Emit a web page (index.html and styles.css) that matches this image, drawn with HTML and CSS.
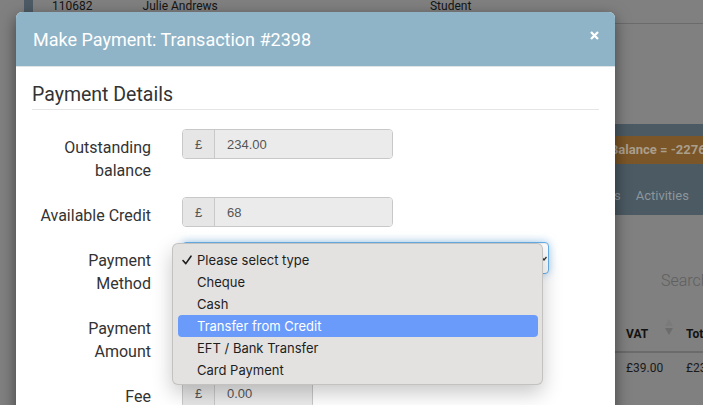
FILE: index.html
```html
<!DOCTYPE html>
<html lang="en">
<head>
<meta charset="utf-8">
<title>Make Payment</title>
<link rel="stylesheet" href="styles.css">
</head>
<body>
<div class="page">
  <div class="toprow">
    <span class="strip"></span>
    <span class="c-id">110682</span>
    <span class="c-name">Julie Andrews</span>
    <span class="c-type">Student</span>
  </div>
  <div class="side">
    <div class="navband">
      <div class="balance">Balance = -2276.00</div>
      <div class="tabs"><span>Payments</span><span>Activities</span></div>
    </div>
    <div class="search">Search</div>
    <div class="thead">
      <span class="th th-vat">VAT<svg class="sort" width="8" height="16" viewBox="0 0 8 16"><path d="M4 0 L8 7 L0 7 Z" fill="#7a7a7a"/><path d="M0 9 L8 9 L4 16 Z" fill="#6c6c6c"/></svg></span>
      <span class="th">Total</span>
    </div>
    <div class="trow"><span class="td">£39.00</span><span class="td">£234.00</span></div>
  </div>
</div>

<div class="modal">
  <div class="mhead">
    <h4 class="mtitle">Make Payment: Transaction #2398</h4>
    <svg class="close" width="9" height="9" viewBox="0 0 9 9"><path d="M1 1 L8 8 M8 1 L1 8" stroke="#fff" stroke-width="2.3" fill="none"/></svg>
  </div>
  <div class="mbody">
    <div class="legend">Payment Details</div>

    <div class="form-row">
      <label class="lbl">Outstanding balance</label>
      <div class="igroup"><span class="addon">£</span><span class="val">234.00</span></div>
    </div>

    <div class="form-row">
      <label class="lbl">Available Credit</label>
      <div class="igroup"><span class="addon">£</span><span class="val">68</span></div>
    </div>

    <div class="form-row">
      <label class="lbl">Payment Method</label>
      <div class="select">
        <svg class="sel-arrow" width="6" height="5" viewBox="0 0 6 5"><path d="M0.5 1 L3 4 L5.5 1" stroke="#333" stroke-width="1.3" fill="none"/></svg>
        <div class="popup">
          <div class="opt"><svg class="check" width="10" height="10" viewBox="0 0 10 10"><path d="M1 5.5 L3.8 8.6 L9 1.2" stroke="#1e1e1e" stroke-width="1.6" fill="none" stroke-linecap="round" stroke-linejoin="round"/></svg>Please select type</div>
          <div class="opt">Cheque</div>
          <div class="opt">Cash</div>
          <div class="opt opt-active">Transfer from Credit</div>
          <div class="opt">EFT / Bank Transfer</div>
          <div class="opt">Card Payment</div>
        </div>
      </div>
    </div>

    <div class="form-row">
      <label class="lbl">Payment Amount</label>
      <div class="igroup"><span class="addon">£</span><span class="val">0.00</span></div>
    </div>

    <div class="form-row">
      <label class="lbl">Fee</label>
      <div class="igroup igroup-sm"><span class="addon">£</span><span class="val">0.00</span></div>
    </div>
  </div>
</div>
</body>
</html>
```

FILE: styles.css
```css
* { box-sizing: border-box; }

html, body {
  margin: 0;
  padding: 0;
}

body {
  width: 703px;
  height: 405px;
  overflow: hidden;
  position: relative;
  background: #808080;
  font-family: Roboto, "Liberation Sans", sans-serif;
}

/* ---------- page behind the backdrop ---------- */
.toprow {
  display: flex;
  height: 24px;
  margin-left: 24px;
  border-bottom: 1px solid #6b6b6b;
  font-size: 12px;
  line-height: 12px;
  color: #141414;
}
.strip {
  width: 9px;
  background: #4d5b66;
}
.c-id { margin-left: 19px; width: 90.6px; }
.c-name { width: 287.4px; }

.side {
  margin-left: 540px;
  width: 163px;
}
.navband {
  margin-top: 100px;
  height: 91px;
  padding-top: 12px;
  background: #4b5a63;
}
.balance {
  height: 28px;
  padding-left: 70px;
  background: #7b5628;
  color: #aa9e8c;
  font-size: 13px;
  font-weight: bold;
  line-height: 28px;
  white-space: nowrap;
  overflow: hidden;
}
.tabs {
  display: flex;
  gap: 15px;
  margin-top: 22px;
  padding-left: 23px;
  font-size: 13px;
  line-height: 20px;
  color: #8d969c;
  white-space: nowrap;
}
.search {
  margin-top: 56px;
  padding-left: 121px;
  font-size: 16px;
  font-weight: 300;
  line-height: 20px;
  color: #5f5f5f;
  white-space: nowrap;
}
.thead {
  display: flex;
  margin-top: 33px;
  padding-left: 86px;
  padding-bottom: 7px;
  border-bottom: 2px solid #6b6b6b;
  font-size: 12px;
  font-weight: bold;
  line-height: 20px;
  color: #121212;
  white-space: nowrap;
}
.th { display: flex; align-items: flex-start; }
.th-vat { width: 60px; flex: none; }
.sort { margin-left: 17px; margin-top: -5px; }
.trow {
  display: flex;
  padding-top: 5px;
  padding-left: 86px;
  font-size: 12px;
  line-height: 20px;
  color: #1a1a1a;
  white-space: nowrap;
}
.td:first-child { width: 60px; flex: none; }

/* ---------- modal ---------- */
.modal {
  position: absolute;
  left: 16px;
  top: 12px;
  width: 599px;
  height: 440px;
  background: #fff;
  border-radius: 6px;
  box-shadow: 0 5px 15px rgba(0, 0, 0, 0.5);
  overflow: hidden;
}
.mhead {
  height: 55px;
  display: flex;
  align-items: center;
  justify-content: space-between;
  padding: 0 16px 0 17px;
  background: #8fb4c7;
  border-bottom: 1px solid #dfe4e7;
}
.mtitle {
  margin: 0;
  font-size: 18px;
  font-weight: 400;
  line-height: 21px;
  color: #fff;
}
.close { margin-bottom: 8px; }

.mbody {
  padding: 18px 16px 0;
}
.legend {
  font-size: 19.5px;
  line-height: 20px;
  color: #333;
  padding-bottom: 4px;
  border-bottom: 1px solid #e5e5e5;
  margin-bottom: 19px;
}

.form-row {
  display: flex;
  align-items: flex-start;
  margin-bottom: 15px;
}
.lbl {
  width: 119px;
  margin-right: 31px;
  padding-top: 7px;
  text-align: right;
  font-size: 16px;
  line-height: 23px;
  color: #333;
}
.igroup {
  display: flex;
  width: 211px;
  height: 30px;
  border: 1px solid #c8c8c8;
  border-radius: 4px;
  overflow: hidden;
  font-family: "Liberation Sans", Arial, sans-serif;
  font-size: 13px;
  color: #555;
}
.igroup-sm { width: 131px; }
.addon {
  width: 32px;
  display: flex;
  align-items: center;
  justify-content: center;
  background: #e6e6e6;
  border-right: 1px solid #c8c8c8;
}
.val {
  flex: 1;
  display: flex;
  align-items: center;
  padding-left: 12px;
  background: #ebebeb;
}

.select {
  position: relative;
  width: 367px;
  height: 32px;
  background: #fff;
  border: 1px solid #66afe9;
  border-radius: 4px;
  box-shadow: inset 0 1px 1px rgba(0, 0, 0, 0.075), 0 0 8px rgba(102, 175, 233, 0.6);
  display: flex;
  align-items: center;
  justify-content: flex-end;
  padding-right: 1px;
}

.popup {
  position: absolute;
  left: -11px;
  top: 0;
  width: 371px;
  padding: 5px 4px 3px 5px;
  background: #e3e2e0;
  border: 1px solid rgba(0, 0, 0, 0.14);
  border-radius: 6px;
  box-shadow: 0 8px 20px rgba(0, 0, 0, 0.22);
  font-family: Inter, "Noto Sans", sans-serif;
  font-size: 13px;
  color: #1e1e1e;
}
.opt {
  position: relative;
  height: 22px;
  line-height: 22px;
  padding-left: 19px;
  border-radius: 4px;
  white-space: nowrap;
}
.opt-active {
  background: #6a9bfb;
  color: #fff;
}
.check {
  position: absolute;
  left: 4px;
  top: 6px;
}
```
